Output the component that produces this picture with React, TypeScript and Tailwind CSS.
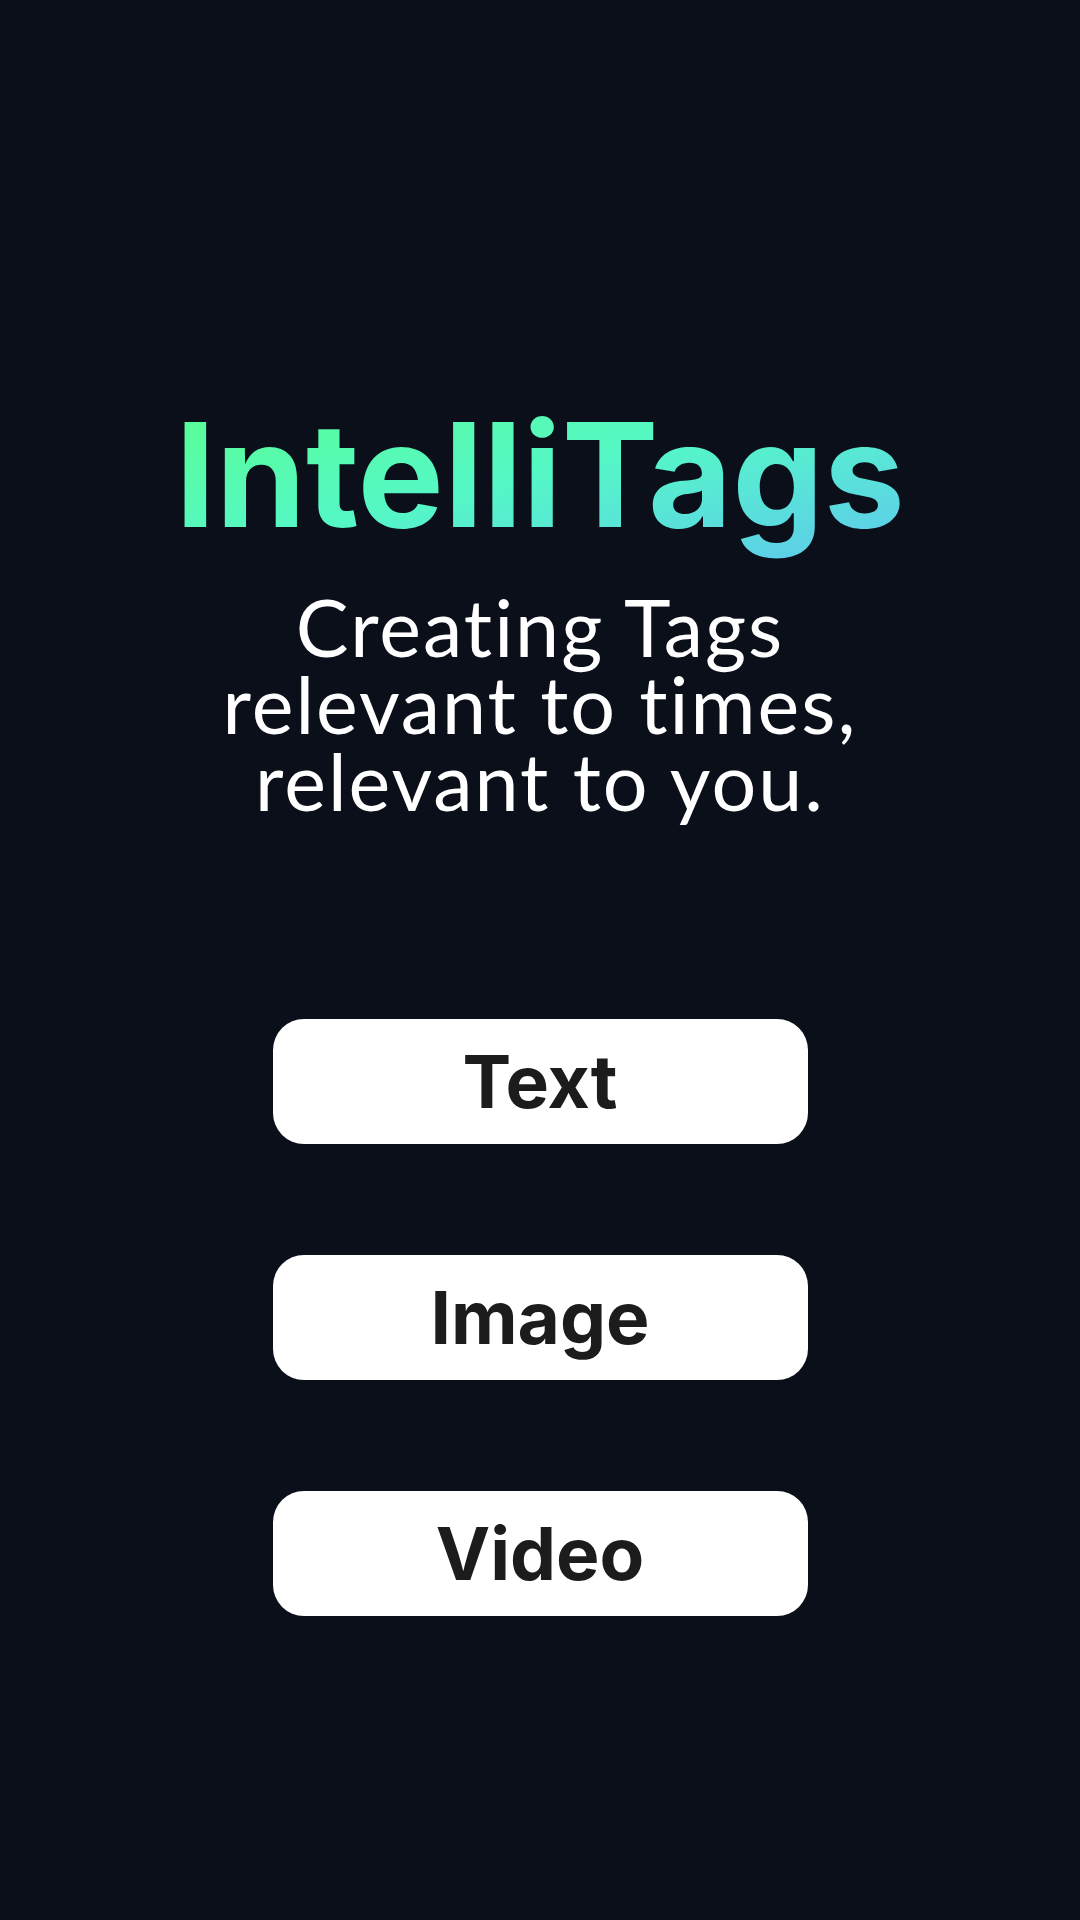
import React from "react";

export default function App() {
  const buttons = ["Text", "Image", "Video"];
  return (
    <div className="w-[1080px] h-[1920px] bg-[#0a0f1a] flex flex-col items-center">
      <h1 className="mt-[384px] text-[145px] leading-[1.25] font-bold tracking-[0px] font-['Inter',sans-serif] bg-gradient-to-br from-[#5bff89] via-[#55f7c6] to-[#5fc6ee] bg-clip-text text-transparent">
        IntelliTags
      </h1>
      <p className="mt-[23px] text-[79px] leading-[77px] text-white text-center tracking-[2px] font-['Lato',sans-serif]">
        Creating Tags
        <br />
        relevant to times,
        <br />
        relevant to you.
      </p>
      <div className="mt-[200px] flex flex-col gap-[111px]">
        {buttons.map((b) => (
          <button
            key={b}
            className="w-[535px] h-[125px] rounded-[31px] bg-white text-[#1c1c1c] text-[73px] font-bold font-['Inter',sans-serif] flex items-center justify-center"
          >
            {b}
          </button>
        ))}
      </div>
    </div>
  );
}
